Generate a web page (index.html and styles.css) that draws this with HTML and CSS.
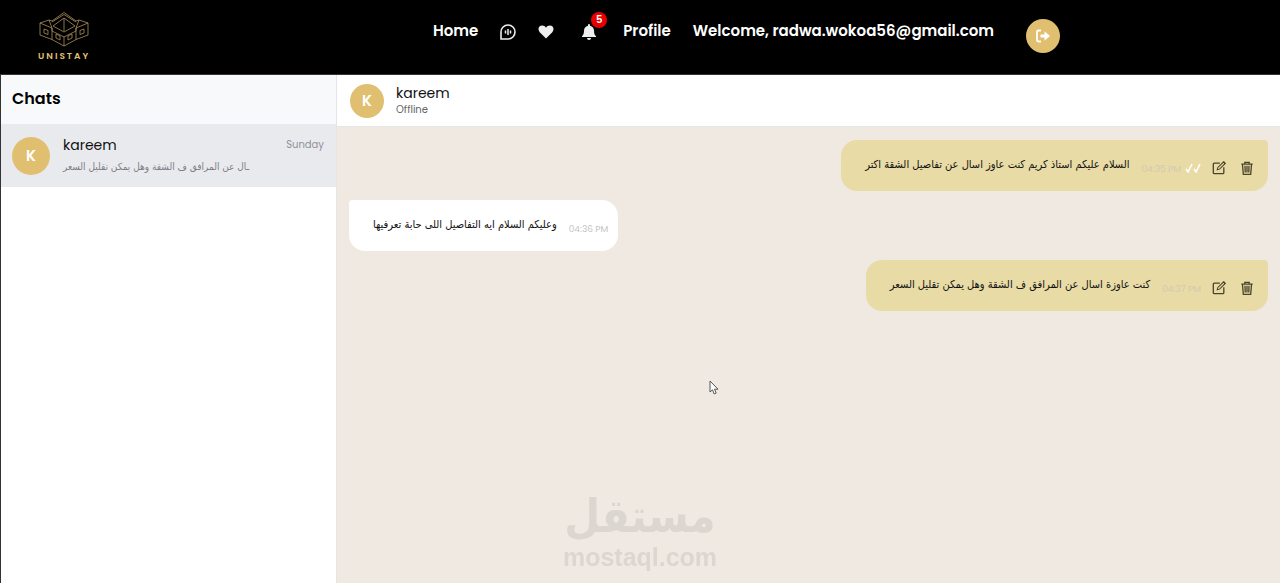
FILE: index.html
```
<!DOCTYPE html>
<html lang="en">
<head>
    <meta charset="UTF-8">
    <meta name="viewport" content="width=device-width, initial-scale=1.0">
    <title>Unistay - Chats</title>
    <link rel="stylesheet" href="styles.css">
</head>
<body>
    <!-- Icons used more than once -->
    <svg class="sprite" aria-hidden="true">
        <symbol id="icon-edit" viewBox="0 0 16 16">
            <path d="M9 2.500H2.500a1 1 0 0 0-1 1v10a1 1 0 0 0 1 1h10a1 1 0 0 0 1-1V7" fill="none" stroke="currentColor" stroke-width="1.500"/>
            <path d="M6 10l.7-2.600L13 1.200l1.900 1.900-6.300 6.200z" fill="none" stroke="currentColor" stroke-width="1.200"/>
            <path d="M12.300.9l1.400-.7 2 2-.7 1.500z" fill="currentColor"/>
        </symbol>
        <symbol id="icon-trash" viewBox="0 0 16 16">
            <path d="M1.500 3.500h13M5.500 3V1.500h5V3M2.800 3.500l1 11.700h8.400l1-11.700M5.700 5.500l.3 7.700M8 5.500v7.700M10.300 5.500l-.3 7.700" fill="none" stroke="currentColor" stroke-width="1.500"/>
        </symbol>
    </svg>

    <header class="navbar">
        <a href="#" class="logo">
            <svg class="logo-mark" viewBox="0 0 50 36" aria-hidden="true">
                <path d="M1 12l9-3 3 1L25 1.500 37 10l3-1 9 3-12 5v3l-12 6-12-6v-3zM1 12v12l12 4.500L25 35l12-6.500L49 24V12M13 17v11.500M37 17v11.500M25 26v9M25 7v13M14 15l11-8 11 8M14 15l11 6 11-6M10 9l3 8M40 9l-3 8"/>
                <path d="M5 18l4 1.500v4l-4-1.500zM17 23l4 2v4l-4-2zM29 25l4-2v4l-4 2zM41 19.500l4-1.500v4l-4 1.500zM13 11l12-7.500L37 11"/>
            </svg>
            <span class="logo-text">UNISTAY</span>
        </a>
        <nav class="nav-links">
            <a href="#">Home</a>
            <a href="#" class="nav-icon" aria-label="Messages">
                <svg viewBox="0 0 16 16" width="16" height="16">
                    <path d="M1 15V8a7 7 0 1 1 7 7z" fill="none" stroke="currentColor" stroke-width="1.600"/>
                    <path d="M5.500 6.500v3M8 5v6M10.500 6.500v3" stroke="currentColor" stroke-width="1.500"/>
                </svg>
            </a>
            <a href="#" class="nav-icon" aria-label="Favourites">
                <svg viewBox="0 0 16 16" width="16" height="16">
                    <path d="M8 14.500L1.700 8.200C-.8 5.300.7 1.500 4.200 1.500c1.700 0 3 .9 3.800 2.200.8-1.300 2.100-2.200 3.800-2.200 3.500 0 5 3.800 2.500 6.700z" fill="currentColor"/>
                </svg>
            </a>
            <a href="#" class="nav-icon nav-bell" aria-label="Notifications">
                <svg viewBox="0 0 16 16" width="16" height="16">
                    <path d="M8 0a1 1 0 0 1 1 1v.7c2.500.5 4 2.500 4 5 0 3.300.8 4.300 2 5.500v.8H1v-.8c1.200-1.200 2-2.200 2-5.500 0-2.500 1.500-4.500 4-5V1a1 1 0 0 1 1-1zM6 14h4a2 2 0 0 1-4 0z" fill="currentColor"/>
                </svg>
                <span class="badge">5</span>
            </a>
            <a href="#">Profile</a>
            <span>Welcome, radwa.wokoa56@gmail.com</span>
        </nav>
        <button type="button" class="logout" aria-label="Log out">
            <svg viewBox="0 0 16 16" width="16" height="16">
                <path d="M6 2.500H3.500a1.500 1.500 0 0 0-1.500 1.500v8a1.500 1.500 0 0 0 1.500 1.500H6" fill="none" stroke="currentColor" stroke-width="1.800"/>
                <path d="M5.500 6.500h4V3.300L15 8l-5.500 4.700V9.500h-4z" fill="currentColor"/>
            </svg>
        </button>
    </header>

    <main class="chat-page">
        <aside class="sidebar">
            <h1 class="sidebar-title">Chats</h1>
            <a href="#" class="chat-item">
                <span class="avatar avatar-large">K</span>
                <span class="chat-info">
                    <span class="chat-row">
                        <span class="chat-name">kareem</span>
                        <span class="chat-day">Sunday</span>
                    </span>
                    <span class="chat-preview" lang="ar" dir="rtl">ـال عن المرافق ف الشقة وهل يمكن تقليل السعر</span>
                </span>
            </a>
        </aside>

        <section class="conversation">
            <div class="conversation-header">
                <span class="avatar">K</span>
                <div>
                    <h2 class="contact-name">kareem</h2>
                    <p class="contact-status">Offline</p>
                </div>
            </div>

            <div class="messages">
                <div class="message sent">
                    <p class="message-text" lang="ar" dir="rtl">السلام عليكم استاذ كريم كنت عاوز اسال عن تفاصيل الشقة اكتر</p>
                    <span class="message-time">04:35 PM</span>
                    <svg class="ticks" viewBox="0 0 16 10" width="16" height="10" role="img" aria-label="Read">
                        <path d="M1 6l2 3 4-8M9 6l2 3 4-8" fill="none" stroke="currentColor" stroke-width="1.600"/>
                    </svg>
                    <button type="button" class="action" aria-label="Edit"><svg><use href="#icon-edit"/></svg></button>
                    <button type="button" class="action" aria-label="Delete"><svg><use href="#icon-trash"/></svg></button>
                </div>

                <div class="message received">
                    <p class="message-text" lang="ar" dir="rtl">وعليكم السلام ايه التفاصيل اللى حابة تعرفيها</p>
                    <span class="message-time">04:36 PM</span>
                </div>

                <div class="message sent">
                    <p class="message-text" lang="ar" dir="rtl">كنت عاوزة اسال عن المرافق ف الشقة وهل يمكن تقليل السعر</p>
                    <span class="message-time">04:37 PM</span>
                    <button type="button" class="action" aria-label="Edit"><svg><use href="#icon-edit"/></svg></button>
                    <button type="button" class="action" aria-label="Delete"><svg><use href="#icon-trash"/></svg></button>
                </div>
            </div>
        </section>
    </main>

    <div class="watermark">
        <span class="watermark-ar" lang="ar" dir="rtl">مستقل</span>
        <span class="watermark-en">mostaql.com</span>
    </div>

    <svg class="cursor" viewBox="0 0 10 15" width="10" height="15" aria-hidden="true">
        <path d="M1 1v11l2.500-2.200L5.200 14l2-.9-1.700-3.900H9z" fill="#fff" stroke="#555" stroke-width="1"/>
    </svg>
</body>
</html>
```
FILE: styles.css
```
* {
    box-sizing: border-box;
}

body {
    margin: 0;
    min-height: 100vh;
    display: flex;
    flex-direction: column;
    font-family: Poppins, Inter, "DejaVu Sans", sans-serif;
    color: #111;
    background-color: #fff;
}

a {
    color: inherit;
    text-decoration: none;
}

h1, h2, p {
    margin: 0;
}

button {
    display: flex;
    align-items: center;
    justify-content: center;
    padding: 0;
    border: none;
    cursor: pointer;
}

.sprite {
    display: none;
}

/* Top bar */
.navbar {
    display: flex;
    align-items: center;
    height: 75px;
    padding: 0 220px 2px 38px;
    background-color: #000;
    border-bottom: 1px solid #333;
}

.logo {
    display: flex;
    flex-direction: column;
    align-items: center;
    gap: 4px;
}

.logo-mark {
    width: 50px;
    height: 36px;
    fill: none;
    stroke: #a8905a;
    stroke-width: 0.8;
}

.logo-text {
    font-size: 9px;
    line-height: 10px;
    font-weight: 600;
    letter-spacing: 2px;
    color: #e0c070;
}

.nav-links {
    display: flex;
    align-items: center;
    gap: 22px;
    margin-left: auto;
    padding-bottom: 10px;
    font-size: 15px;
    line-height: 24px;
    font-weight: 600;
    color: #fff;
}

.nav-icon {
    display: flex;
    padding-top: 2px;
    color: #eee;
}

.nav-bell {
    position: relative;
    margin: 0 4px 0 5px;
}

.badge {
    position: absolute;
    top: -10px;
    right: -10px;
    width: 16px;
    height: 16px;
    border-radius: 50%;
    background-color: #e60000;
    color: #fff;
    font-size: 10px;
    line-height: 16px;
    text-align: center;
}

.logout {
    width: 34px;
    height: 34px;
    margin-left: 32px;
    border-radius: 50%;
    background-color: #e0c070;
    color: #fff;
}

/* Page */
.chat-page {
    flex: 1;
    display: grid;
    grid-template-columns: 337px 1fr;
}

.sidebar {
    border-left: 1px solid #333;
    border-right: 1px solid #e5e5e5;
}

.sidebar-title {
    padding: 12px 11px 13px;
    font-size: 16px;
    line-height: 24px;
    font-weight: 600;
    color: #000;
    background-color: #f8f9fb;
}

.chat-item {
    display: flex;
    align-items: center;
    gap: 13px;
    padding: 10px 12px 9px 11px;
    background-color: #e9eaee;
}

.avatar {
    flex: none;
    width: 34px;
    height: 34px;
    border-radius: 50%;
    background-color: #e0c070;
    color: #fff;
    font-size: 15px;
    line-height: 34px;
    font-weight: 600;
    text-align: center;
}

.avatar-large {
    width: 38px;
    height: 38px;
    line-height: 38px;
}

.chat-info {
    flex: 1;
    min-width: 0;
}

.chat-row {
    display: flex;
    align-items: center;
    justify-content: space-between;
}

.chat-name {
    font-size: 14px;
    line-height: 22px;
}

.chat-day {
    font-size: 10px;
    color: #8e9399;
}

.chat-preview {
    display: block;
    width: fit-content;
    font-family: "DejaVu Sans Condensed", "DejaVu Sans", sans-serif;
    font-size: 10px;
    line-height: 22px;
    color: #7c8086;
}

.conversation {
    display: flex;
    flex-direction: column;
    background-color: #efe9e2;
}

.conversation-header {
    display: flex;
    align-items: center;
    gap: 12px;
    height: 52px;
    padding: 0 13px;
    background-color: #fff;
    border-bottom: 1px solid #e5e5e5;
}

.contact-name {
    font-size: 14px;
    line-height: 18px;
    font-weight: 400;
}

.contact-status {
    font-size: 10px;
    line-height: 16px;
    color: #666;
}

.messages {
    display: flex;
    flex-direction: column;
    gap: 9px;
    padding: 13px 12px;
}

.message {
    display: flex;
    align-items: center;
    height: 51px;
    padding: 0 10px 0 24px;
}

.sent {
    align-self: flex-end;
    padding-right: 14px;
    border-radius: 16px 4px 16px 16px;
    background-color: #e8dba5;
}

.received {
    align-self: flex-start;
    border-radius: 4px 16px 16px 16px;
    background-color: #fff;
}

.message-text {
    padding-bottom: 2px;
    font-family: "DejaVu Sans Condensed", "DejaVu Sans", sans-serif;
    font-size: 11px;
    line-height: 16px;
}

.message-time {
    margin: 6px 0 0 12px;
    font-size: 9px;
    line-height: 12px;
    color: #c4c4c4;
}

.sent .message-time {
    color: #d3cab4;
}

.ticks {
    margin: 5px 0 0 4px;
    color: #fff;
}

.action {
    width: 14px;
    height: 14px;
    margin: 5px 0 0 14px;
    background: none;
    color: #4a442c;
}

.action svg {
    width: 14px;
    height: 14px;
}

.message-time + .action,
.ticks + .action {
    margin-left: 11px;
}

/* Overlays */
.watermark {
    position: fixed;
    left: 50%;
    bottom: 12px;
    transform: translateX(-50%);
    display: flex;
    flex-direction: column;
    align-items: center;
    font-weight: 700;
    color: #dcd6d0;
    pointer-events: none;
}

.watermark-ar {
    font-family: "DejaVu Sans Condensed", "DejaVu Sans", sans-serif;
    font-size: 46px;
    line-height: 54px;
}

.watermark-en {
    font-family: "Liberation Sans", sans-serif;
    font-size: 25px;
    line-height: 28px;
}

.cursor {
    position: fixed;
    left: 709px;
    top: 380px;
    pointer-events: none;
}
```
